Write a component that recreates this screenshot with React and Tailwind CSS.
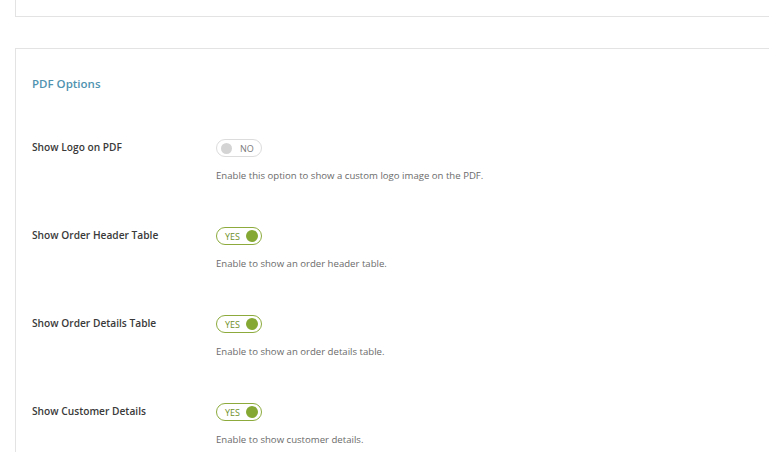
import React from "react";

const rows = [
  { label: "Show Logo on PDF", on: false, desc: "Enable this option to show a custom logo image on the PDF." },
  { label: "Show Order Header Table", on: true, desc: "Enable to show an order header table." },
  { label: "Show Order Details Table", on: true, desc: "Enable to show an order details table." },
  { label: "Show Customer Details", on: true, desc: "Enable to show customer details." },
];

function Toggle({ on }) {
  if (on) {
    return (
      <div className="flex items-center justify-between w-[46px] h-[18px] rounded-full border border-[#8cab3c] bg-white pl-[8px] pr-[3px]">
        <span className="text-[9px] leading-none text-[#6f8f27]">YES</span>
        <span className="w-[12px] h-[12px] rounded-full bg-[#84a833]" />
      </div>
    );
  }
  return (
    <div className="flex items-center gap-[8px] w-[46px] h-[18px] rounded-full border border-[#dcdcdc] bg-white pl-[4px]">
      <span className="w-[11px] h-[11px] rounded-full bg-[#d4d4d4]" />
      <span className="text-[9px] leading-none text-[#7a7a7a]">NO</span>
    </div>
  );
}

export default function App() {
  return (
    <div className="w-[769px] h-[452px] overflow-hidden bg-white" style={{ fontFamily: '"Open Sans", "Noto Sans", sans-serif' }}>
      <div className="ml-[15px] h-[17px] border-l border-b border-[#e3e3e3] -mr-[2px]" />
      <div className="ml-[15px] mt-[31px] border-l border-t border-[#e3e3e3] pl-[16px] pt-[27px] -mr-[2px] h-[420px]">
        <h2 className="text-[11.5px] font-semibold text-[#4f93b0] leading-[16px]">PDF Options</h2>
        <div className="mt-[48px] flex flex-col gap-[46px]">
          {rows.map((r) => (
            <div key={r.label} className="flex">
              <div className="w-[184px] text-[10.2px] font-semibold text-[#3a3a3a] leading-[14px]">{r.label}</div>
              <div className="flex flex-col -mt-[1px]">
                <Toggle on={r.on} />
                <div className="mt-[13px] text-[9.6px] text-[#6b6b6b] leading-[12px]">{r.desc}</div>
              </div>
            </div>
          ))}
        </div>
      </div>
    </div>
  );
}
